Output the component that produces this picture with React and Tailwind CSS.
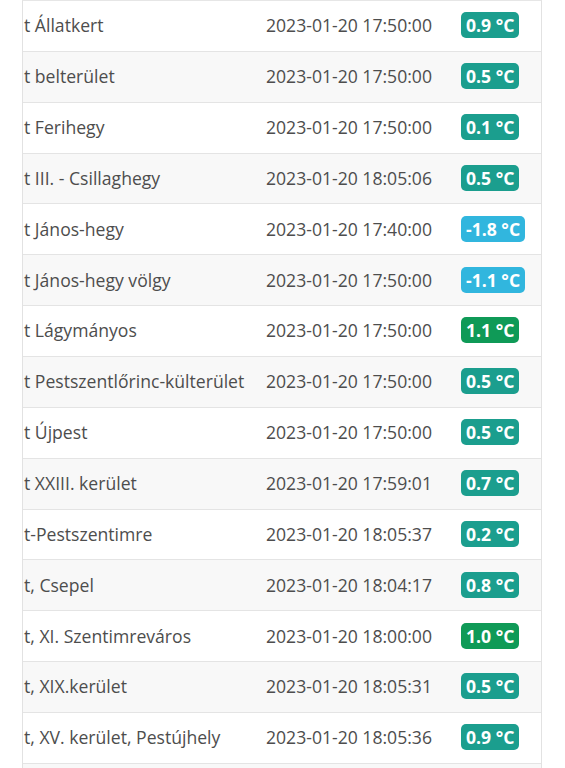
import React from "react";

const rows = [
  ["t Állatkert", "2023-01-20 17:50:00", "0.9 °C", "teal"],
  ["t belterület", "2023-01-20 17:50:00", "0.5 °C", "teal"],
  ["t Ferihegy", "2023-01-20 17:50:00", "0.1 °C", "teal"],
  ["t III. - Csillaghegy", "2023-01-20 18:05:06", "0.5 °C", "teal"],
  ["t János-hegy", "2023-01-20 17:40:00", "-1.8 °C", "cyan"],
  ["t János-hegy völgy", "2023-01-20 17:50:00", "-1.1 °C", "cyan"],
  ["t Lágymányos", "2023-01-20 17:50:00", "1.1 °C", "green"],
  ["t Pestszentlőrinc-külterület", "2023-01-20 17:50:00", "0.5 °C", "teal"],
  ["t Újpest", "2023-01-20 17:50:00", "0.5 °C", "teal"],
  ["t XXIII. kerület", "2023-01-20 17:59:01", "0.7 °C", "teal"],
  ["t-Pestszentimre", "2023-01-20 18:05:37", "0.2 °C", "teal"],
  ["t, Csepel", "2023-01-20 18:04:17", "0.8 °C", "teal"],
  ["t, XI. Szentimreváros", "2023-01-20 18:00:00", "1.0 °C", "green"],
  ["t, XIX.kerület", "2023-01-20 18:05:31", "0.5 °C", "teal"],
  ["t, XV. kerület, Pestújhely", "2023-01-20 18:05:36", "0.9 °C", "teal"],
];

const badgeColor = {
  teal: "bg-[#1b9e8e]",
  cyan: "bg-[#31b6de]",
  green: "bg-[#0f9a57]",
};

export default function App() {
  return (
    <div
      className="w-[565px] h-[768px] overflow-hidden bg-white"
      style={{ fontFamily: '"Open Sans", sans-serif' }}
    >
      <div className="ml-[22px] w-[520px] h-[768px] border-x border-[#e2e2e2] border-t border-t-[#e6e6e6]">
        {rows.map(([name, date, temp, color], i) => (
          <div
            key={i}
            className={`grid grid-cols-[243px_195px_1fr] items-center h-[50.86px] pb-[1px] border-b border-[#e4e4e4] text-[17.6px] text-[#4d4d4d] ${
              i % 2 === 1 ? "bg-[#f8f8f8]" : "bg-white"
            }`}
          >
            <div className="pl-[1px] whitespace-nowrap overflow-hidden">{name}</div>
            <div className="whitespace-nowrap">{date}</div>
            <div>
              <span
                className={`inline-block ${badgeColor[color]} text-white font-bold rounded-[5px] px-[5px] leading-[26px] h-[26px] whitespace-nowrap`}
              >
                {temp}
              </span>
            </div>
          </div>
        ))}
        <div className="h-[10px] bg-[#f8f8f8]" />
      </div>
    </div>
  );
}
